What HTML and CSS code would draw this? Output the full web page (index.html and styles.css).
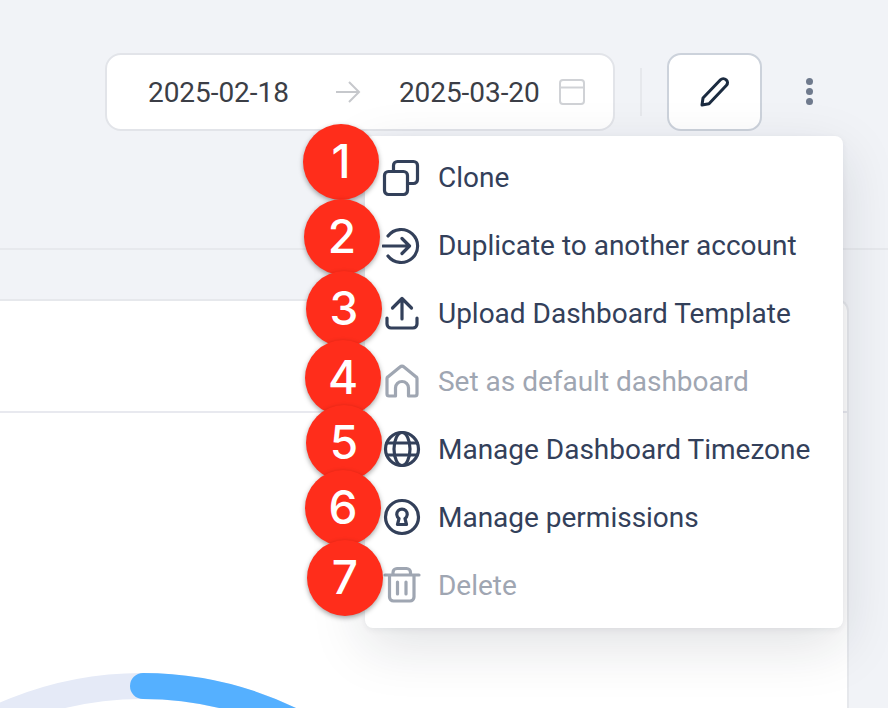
FILE: index.html
```html
<!DOCTYPE html>
<html lang="en">
<head>
<meta charset="utf-8">
<title>Dashboard menu</title>
<link rel="stylesheet" href="styles.css">
</head>
<body>
<div class="page">
  <header class="toolbar">
    <div class="range">
      <span class="date">2025-02-18</span>
      <svg class="range-arrow" viewBox="0 0 26 24"><path d="M1 12H24M14 2L24 12L14 22"/></svg>
      <span class="date">2025-03-20</span>
      <svg class="cal" viewBox="0 0 26 26"><rect x="1" y="1" width="24" height="24" rx="3"/><path d="M1 8.500H25"/></svg>
    </div>
    <div class="vsep"></div>
    <button class="edit" type="button">
      <svg viewBox="0 0 30 30"><path d="M2 28L3 21L20.500 2.800C22 1.300 24.500 1.300 26.200 2.800C27.900 4.500 27.900 6.800 26.500 8.300L9 26.800Z"/></svg>
    </button>
    <div class="kebab"><i></i><i></i><i></i></div>
  </header>
  <div class="rule"></div>
  <section class="card">
    <div class="card-head"></div>
    <div class="card-body">
      <svg class="gauge" viewBox="0 0 849 36">
        <circle class="track" cx="142" cy="356" r="343"/>
        <path class="value" d="M143 13A343 343 0 0 1 420 155"/>
      </svg>
    </div>
  </section>

  <nav class="menu">
    <div class="item">
      <svg viewBox="0 0 40 40"><rect x="2.500" y="14.500" width="23" height="23" rx="4"/><path d="M11.500 14V8.500a4 4 0 0 1 4-4H31.500a4 4 0 0 1 4 4V22.500a4 4 0 0 1-4 4H26"/></svg>
      <span>Clone</span>
    </div>
    <div class="item">
      <svg viewBox="0 0 40 40"><path d="M6 11A16.500 16.500 0 1 1 6 31M1 21H27M20 13.500L27.500 21L20 28.500"/></svg>
      <span>Duplicate to another account</span>
    </div>
    <div class="item">
      <svg viewBox="0 0 40 40"><path d="M20 26V6M10.500 15L20 5.500L29.500 15M5 25V31a4 4 0 0 0 4 4H31a4 4 0 0 0 4-4V25"/></svg>
      <span>Upload Dashboard Template</span>
    </div>
    <div class="item off">
      <svg viewBox="0 0 40 40"><path d="M13.500 35H7a2 2 0 0 1-2-2V17.500a2 2 0 0 1 .8-1.600L18 6a3 3 0 0 1 4 0L34.200 15.900a2 2 0 0 1 .8 1.600V33a2 2 0 0 1-2 2H26.500V27a6.500 6.500 0 0 0-13 0V35Z"/></svg>
      <span>Set as default dashboard</span>
    </div>
    <div class="item">
      <svg viewBox="0 0 40 40"><circle cx="20" cy="20" r="16.500"/><ellipse cx="20" cy="20" rx="8" ry="16.500"/><path d="M5 14H35M5 26H35"/></svg>
      <span>Manage Dashboard Timezone</span>
    </div>
    <div class="item">
      <svg viewBox="0 0 40 40"><circle cx="20" cy="20" r="16.500"/><path d="M17 21.500L15.500 27.500H24.500L23 21.500A5.200 5.200 0 1 0 17 21.500Z"/></svg>
      <span>Manage permissions</span>
    </div>
    <div class="item off">
      <svg viewBox="0 0 40 40"><path d="M3 10H37M11 10V7.500a4 4 0 0 1 4-4H24.500a4 4 0 0 1 4 4V10M7.500 10V32a4 4 0 0 0 4 4H28a4 4 0 0 0 4-4V10M15.500 17V29M24 17V29"/></svg>
      <span>Delete</span>
    </div>
  </nav>

  <b class="badge b1">1</b>
  <b class="badge b2">2</b>
  <b class="badge b3">3</b>
  <b class="badge b4">4</b>
  <b class="badge b5">5</b>
  <b class="badge b6">6</b>
  <b class="badge b7">7</b>
</div>
</body>
</html>
```
FILE: styles.css
```css
* { box-sizing: border-box; }
html, body { margin: 0; padding: 0; }
body { background: #f1f3f7; font-family: Roboto, "Liberation Sans", sans-serif; }
.page { position: relative; width: 888px; height: 708px; padding-top: 53px; overflow: hidden; }

.toolbar { display: flex; align-items: center; height: 78px; padding-left: 105px; }
.range { display: flex; align-items: center; width: 510px; height: 78px; padding: 0 28px 0 41px; background: #fff; border: 2px solid #e2e4e9; border-radius: 16px; }
.date { font-size: 28px; letter-spacing: -.05px; color: #3b3e46; white-space: nowrap; }
.range-arrow { width: 26px; height: 24px; margin: 0 38px 0 46px; fill: none; stroke: #c6c8cc; stroke-width: 2; }
.cal { width: 26px; height: 26px; margin-left: auto; fill: none; stroke: #d0d2d6; stroke-width: 2; }
.vsep { width: 2px; height: 48px; margin: 0 25px; background: #e6e8ec; }
.edit { display: flex; align-items: center; justify-content: center; width: 95px; height: 78px; padding: 0; background: #fff; border: 2px solid #ccd2db; border-radius: 14px; }
.edit svg { width: 30px; height: 30px; fill: none; stroke: #1b2b40; stroke-width: 3; stroke-linejoin: round; }
.kebab { display: flex; flex-direction: column; align-items: center; gap: 3px; margin-left: 44px; margin-top: -1px; }
.kebab i { width: 7px; height: 7px; border-radius: 50%; background: #6f7a8d; }

.rule { height: 2px; margin-top: 117px; background: #e7e9ed; }
.card { width: 849px; height: 420px; margin-top: 49px; background: #fff; border: solid #e6e8ec; border-width: 2px 2px 0 0; border-top-right-radius: 12px; }
.card-head { height: 112px; border-bottom: 2px solid #e8e9ef; }
.card-body { padding-top: 260px; }
.gauge { display: block; width: 849px; height: 36px; fill: none; stroke-width: 26; }
.track { stroke: #e5eaf7; }
.value { stroke: #55b0ff; stroke-linecap: round; }

.menu { position: absolute; left: 365px; top: 136px; width: 478px; height: 492px; padding: 7px 0 9px; background: #fff; border-radius: 8px; box-shadow: 0 18px 56px rgba(20, 28, 50, .13), 0 2px 6px rgba(20, 28, 50, .06); }
.item { display: flex; align-items: center; height: 68px; padding-left: 17px; font-size: 28px; letter-spacing: -.01px; color: #33405a; white-space: nowrap; }
.item svg { flex: none; width: 40px; height: 40px; margin-right: 16px; fill: none; stroke: currentColor; stroke-width: 3.200; stroke-linecap: round; stroke-linejoin: round; }
.off { color: #9fa6b2; }

.badge { position: absolute; display: flex; align-items: center; justify-content: center; width: 76px; height: 76px; padding-bottom: 2px; border-radius: 50%; background: #ff2d1b; color: #fff; font: 550 46px Inter, Roboto, sans-serif; box-shadow: 0 2px 5px rgba(0, 0, 0, .35); }
.b1 { left: 303px; top: 124px; }
.b2 { left: 304px; top: 199px; }
.b3 { left: 306px; top: 271px; }
.b4 { left: 305px; top: 340px; }
.b5 { left: 306px; top: 405px; }
.b6 { left: 305px; top: 470px; }
.b7 { left: 307px; top: 540px; }
```
